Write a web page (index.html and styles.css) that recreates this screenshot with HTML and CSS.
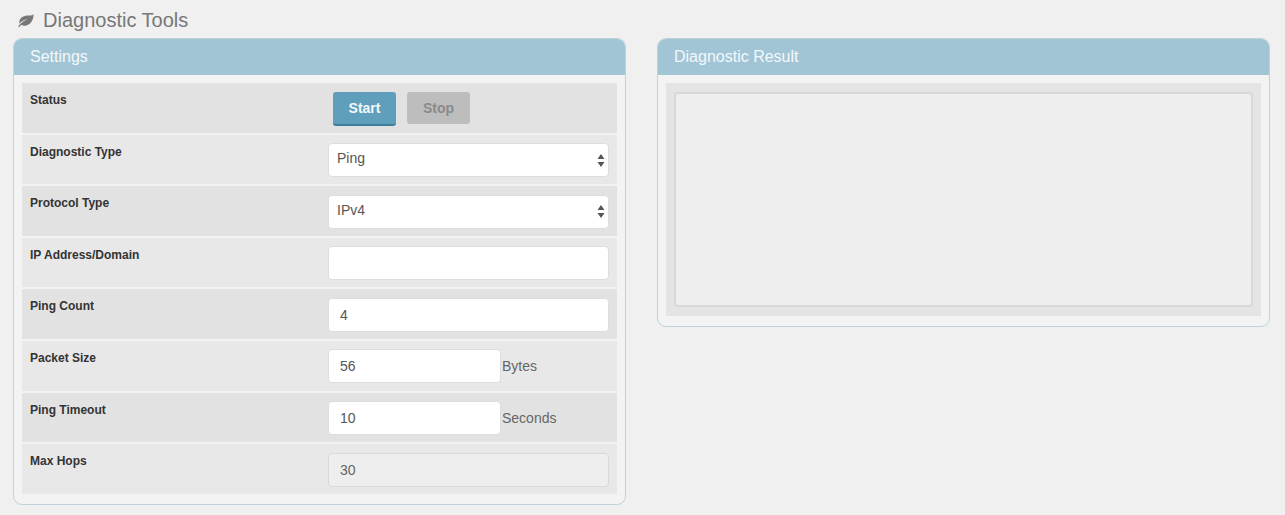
FILE: index.html
```html
<!DOCTYPE html>
<html lang="en">
<head>
    <meta charset="UTF-8">
    <title>Diagnostic Tools</title>
    <link rel="stylesheet" href="styles.css">
</head>

<body>
    <h1 class="page-title">
        <svg class="leaf" viewBox="0 0 16 14" width="17" height="15">
            <path d="M15.6 .8C14.9 1.900 13.600 2.200 11.600 2.200 6.600 2.200 2.600 3.900 2.200 8.100c-.1.7 0 1.400.2 1.900C4 8 6.700 6.500 10.200 5.700 7 7 4 9 1.100 12.300l1 1C3 12.200 3.500 11.500 4 11c1.300.9 3 1.100 4.800.6 4.500-1.200 6.800-5.700 6.800-10.800z" fill="#777"/>
        </svg>
        Diagnostic Tools
    </h1>

    <div class="columns">
        <div class="panel">
            <div class="panel-head">Settings</div>
            <div class="panel-body">
                <div class="row">
                    <div class="label">Status</div>
                    <div class="field buttons">
                        <button class="btn btn-start">Start</button>
                        <button class="btn btn-stop">Stop</button>
                    </div>
                </div>
                <div class="row">
                    <div class="label">Diagnostic Type</div>
                    <div class="field select-wrap">
                        <select class="input select"><option>Ping</option></select>
                        <svg class="arrows" viewBox="0 0 8 13" width="8" height="13"><path d="M4 0l3.500 5H.5zM4 13L.5 8h7z" fill="#555"/></svg>
                    </div>
                </div>
                <div class="row">
                    <div class="label">Protocol Type</div>
                    <div class="field select-wrap">
                        <select class="input select"><option>IPv4</option></select>
                        <svg class="arrows" viewBox="0 0 8 13" width="8" height="13"><path d="M4 0l3.500 5H.5zM4 13L.5 8h7z" fill="#555"/></svg>
                    </div>
                </div>
                <div class="row">
                    <div class="label">IP Address/Domain</div>
                    <div class="field"><input class="input" type="text"></div>
                </div>
                <div class="row">
                    <div class="label">Ping Count</div>
                    <div class="field"><input class="input" type="text" value="4"></div>
                </div>
                <div class="row">
                    <div class="label">Packet Size</div>
                    <div class="field"><input class="input short" type="text" value="56"><span class="unit">Bytes</span></div>
                </div>
                <div class="row">
                    <div class="label">Ping Timeout</div>
                    <div class="field"><input class="input short" type="text" value="10"><span class="unit">Seconds</span></div>
                </div>
                <div class="row">
                    <div class="label">Max Hops</div>
                    <div class="field"><input class="input" type="text" value="30" disabled></div>
                </div>
            </div>
        </div>

        <div class="panel">
            <div class="panel-head">Diagnostic Result</div>
            <div class="panel-body">
                <div class="result-wrap">
                    <textarea class="result"></textarea>
                </div>
            </div>
        </div>
    </div>
</body>
</html>
```

FILE: styles.css
```css
* {
    box-sizing: border-box;
}

body {
    font-family: "Liberation Sans", Arial, sans-serif;
    background: #f0f0f0;
    color: #555;
    margin: 0;
    padding: 0 15px 0 13px;
}

.page-title {
    display: flex;
    align-items: center;
    gap: 9px;
    height: 38px;
    margin: 0;
    padding: 3px 0 0 4px;
    font-size: 20px;
    font-weight: normal;
    color: #777;
}

.columns {
    display: flex;
    align-items: flex-start;
    gap: 31px;
}

.panel {
    flex: 1;
    background: #f3f3f3;
    border: 1px solid #bcd4d8;
    border-radius: 9px;
    overflow: hidden;
}

.panel-head {
    height: 37px;
    margin: -1px -1px 0;
    padding: 0 17px;
    line-height: 37px;
    font-size: 16px;
    color: #f2f8fb;
    background: #a2c5d6;
}

.panel-body {
    padding: 8px 8px 10px;
}

.row {
    display: flex;
    height: 51.6px;
    padding-bottom: 2px;
    background-clip: content-box;
    background-color: #e8e8e8;
}

.row:nth-child(odd) {
    background-color: #e2e2e2;
}

.row:last-child {
    height: 50px;
    padding-bottom: 0;
}

.label {
    width: 306px;
    padding: 10px 0 0 8px;
    font-size: 12px;
    font-weight: bold;
    color: #333;
}

.field {
    position: relative;
    display: flex;
    align-items: flex-start;
    width: 281px;
    padding-top: 8.4px;
}

.input {
    display: block;
    width: 281px;
    height: 34px;
    padding: 0 11px;
    font-family: inherit;
    font-size: 14px;
    color: #555;
    background: #fff;
    border: 1px solid #ddd;
    border-radius: 4px;
    outline: none;
    appearance: none;
}

.select {
    padding: 0 8px 3px;
}

.input:disabled {
    background: #eee;
    border-color: #d8d8d8;
    color: #666;
}

.short {
    width: 173px;
}

.unit {
    padding-left: 1px;
    font-size: 14px;
    line-height: 34px;
    color: #666;
}

.arrows {
    position: absolute;
    right: 4px;
    top: 19px;
}

.buttons {
    gap: 11px;
    padding-left: 5px;
    padding-top: 9px;
}

.btn {
    width: 63px;
    height: 34px;
    border: 0;
    border-radius: 3px;
    font-family: inherit;
    font-size: 14px;
    font-weight: bold;
}

.btn-start {
    color: #f2f8fb;
    background: #5f9fbb;
    border-bottom: 2px solid #3f7f9c;
}

.btn-stop {
    height: 32px;
    color: #8a8a8a;
    background: #bdbdbd;
}

.result-wrap {
    padding: 9px 8px;
    background: #e4e4e4;
}

.result {
    display: block;
    width: 100%;
    height: 215px;
    background: #eee;
    border: 2px solid #d8d8d8;
    border-radius: 4px;
    resize: none;
    outline: none;
}
```
